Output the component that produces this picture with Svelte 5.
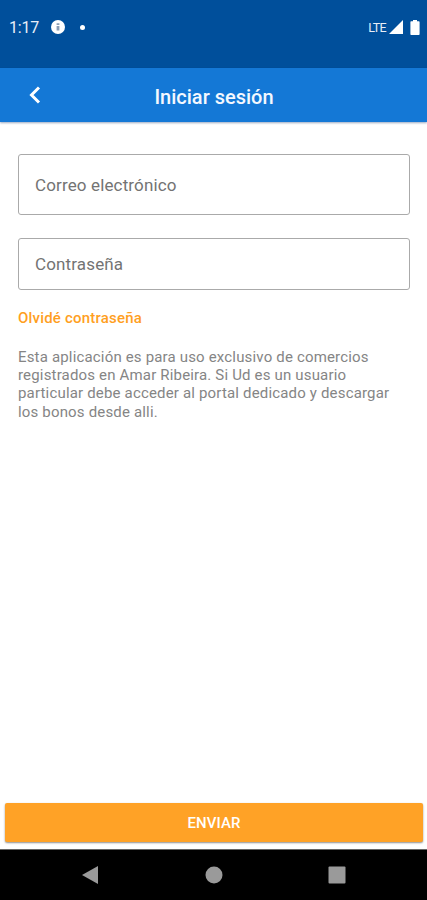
<script lang="ts">
	let email = $state('');
	let password = $state('');

	function handleSubmit(event: SubmitEvent) {
		event.preventDefault();
	}
</script>

<div class="screen">
	<div class="status-bar">
		<span class="clock">1:17</span>
		<svg class="info" viewBox="0 0 14 14" width="14" height="14">
			<circle cx="7" cy="7" r="7" fill="#fff" />
			<path d="M5.6 3.2h2.8v1.9H5.6zM5.6 6h2.8v4.6H5.6z" fill="#8a9db5" />
		</svg>
		<span class="dot"></span>
		<div class="status-right">
			<span class="network">LTE</span>
			<svg class="signal" viewBox="0 0 14 14" width="14" height="14">
				<path d="M14 0v14H0z" fill="#fff" />
			</svg>
			<svg viewBox="0 0 10 15" width="10" height="15">
				<path d="M3 0h4v1.200h1.600c.6 0 1 .4 1 1V14c0 .6-.4 1-1 1H1.400c-.6 0-1-.4-1-1V2.200c0-.6.4-1 1-1H3z" fill="#fff" />
			</svg>
		</div>
	</div>

	<header class="toolbar">
		<button class="back" type="button" aria-label="Volver">
			<svg viewBox="0 0 12 18" width="12" height="18">
				<path d="M10 1.500 2.500 9l7.500 7.500" fill="none" stroke="#fff" stroke-width="3" />
			</svg>
		</button>
		<h1>Iniciar sesión</h1>
	</header>

	<form class="form" onsubmit={handleSubmit}>
		<div class="fields">
			<label class="field email">
				{#if !email}<span>Correo electrónico</span>{/if}
				<input type="email" bind:value={email} />
			</label>
			<label class="field password">
				{#if !password}<span>Contraseña</span>{/if}
				<input type="password" bind:value={password} />
			</label>
			<button class="forgot" type="button">Olvidé contraseña</button>
			<p class="notice">
				Esta aplicación es para uso exclusivo de comercios registrados en Amar Ribeira. Si Ud es un
				usuario particular debe acceder al portal dedicado y descargar los bonos desde alli.
			</p>
		</div>
		<button class="submit" type="submit">ENVIAR</button>
	</form>

	<nav class="nav-bar">
		<svg viewBox="0 0 18 20" width="18" height="20"><path d="M17 1v18L1 10z" fill="#9a9a9a" /></svg>
		<svg viewBox="0 0 18 18" width="18" height="18"><circle cx="9" cy="9" r="8.500" fill="#9a9a9a" /></svg>
		<svg viewBox="0 0 18 18" width="18" height="18"><rect x=".5" y=".5" width="17" height="17" rx="1" fill="#9a9a9a" /></svg>
	</nav>
</div>

<style>
	:global(body) {
		background: #fff;
	}

	.screen {
		display: flex;
		flex-direction: column;
		height: 900px;
		overflow: hidden;
		font-family: Roboto, 'Liberation Sans', sans-serif;
	}

	button {
		border: none;
		padding: 0;
		background: none;
		font-family: inherit;
		cursor: pointer;
	}

	svg {
		display: block;
	}

	.status-bar {
		display: flex;
		align-items: center;
		box-sizing: border-box;
		height: 68px;
		padding: 0 7px 14px 9px;
		background: #004f9b;
		color: #e8eef8;
	}

	.clock {
		width: 42px;
		padding-top: 1px;
		font-size: 16px;
		letter-spacing: -0.2px;
	}

	.dot {
		width: 5px;
		height: 5px;
		margin-left: 15px;
		border-radius: 50%;
		background: #fff;
	}

	.status-right {
		display: flex;
		align-items: center;
		margin-left: auto;
	}

	.network {
		font-size: 12.5px;
		letter-spacing: -0.6px;
	}

	.signal {
		margin: 0 7px 0 3px;
	}

	.toolbar {
		position: relative;
		display: flex;
		align-items: center;
		justify-content: center;
		height: 54px;
		background: #1478d6;
		box-shadow: 0 1px 2px rgba(0, 40, 100, 0.4);
	}

	.back {
		position: absolute;
		left: 29px;
		top: 18px;
	}

	h1 {
		margin: 3px 0 0 1px;
		color: #f4f8ff;
		font-size: 20px;
		font-weight: 500;
		line-height: 24px;
	}

	.form {
		flex: 1;
		display: flex;
		flex-direction: column;
	}

	.fields {
		flex: 1;
		display: flex;
		flex-direction: column;
		align-items: flex-start;
		padding: 32px 17px 0 18px;
	}

	.field {
		position: relative;
		display: flex;
		align-items: center;
		box-sizing: border-box;
		width: 100%;
		padding: 0 16px;
		border: 1px solid #aaa;
		border-radius: 3px;
		color: #737373;
		font-size: 17px;
		letter-spacing: 0.14px;
	}

	.field input {
		position: absolute;
		inset: 0;
		padding: 0 16px;
		border: none;
		outline: none;
		background: transparent;
		font: inherit;
	}

	.email {
		height: 61px;
	}

	.password {
		height: 52px;
		margin-top: 23px;
	}

	.forgot {
		margin-top: 19px;
		color: #ff9f1f;
		font-size: 15px;
		font-weight: 500;
		letter-spacing: 0.2px;
		line-height: 18px;
	}

	.notice {
		margin: 21px 0 0;
		width: 385px;
		color: #858585;
		font-size: 15px;
		letter-spacing: 0.17px;
		line-height: 18.2px;
	}

	.submit {
		height: 39px;
		margin: 0 4px 7px 5px;
		padding-top: 1px;
		border-radius: 2px;
		background: #ffa226;
		box-shadow: 0 1px 2px rgba(0, 0, 0, 0.45);
		color: #fff;
		font-size: 15px;
		font-weight: 500;
		letter-spacing: 0.1px;
	}

	.nav-bar {
		display: flex;
		align-items: center;
		justify-content: space-between;
		box-sizing: border-box;
		height: 51px;
		padding: 0 81px 1px;
		border-top: 1px solid #666;
		background: #000;
	}
</style>
